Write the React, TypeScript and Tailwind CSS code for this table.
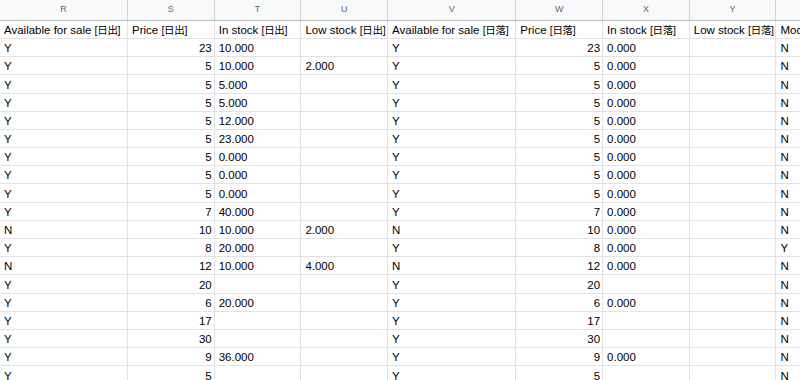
import React from "react";

type Col = { letter: string; w: string; head: string; cjk: string; right?: boolean };

const cols: Col[] = [
  { letter: "R", w: "w-[128px]", head: "Available for sale ", cjk: "[日出]" },
  { letter: "S", w: "w-[86.7px]", head: "Price ", cjk: "[日出]", right: true },
  { letter: "T", w: "w-[86.7px]", head: "In stock ", cjk: "[日出]" },
  { letter: "U", w: "w-[86.7px]", head: "Low stock ", cjk: "[日出]" },
  { letter: "V", w: "w-[128.3px]", head: "Available for sale ", cjk: "[日落]" },
  { letter: "W", w: "w-[86.7px]", head: "Price ", cjk: "[日落]", right: true },
  { letter: "X", w: "w-[86.7px]", head: "In stock ", cjk: "[日落]" },
  { letter: "Y", w: "w-[86.7px]", head: "Low stock ", cjk: "[日落]" },
  { letter: "Z", w: "w-[100px]", head: "Mod", cjk: "" },
];

const rows: string[][] = [
  ["Y", "23", "10.000", "", "Y", "23", "0.000", "", "N"],
  ["Y", "5", "10.000", "2.000", "Y", "5", "0.000", "", "N"],
  ["Y", "5", "5.000", "", "Y", "5", "0.000", "", "N"],
  ["Y", "5", "5.000", "", "Y", "5", "0.000", "", "N"],
  ["Y", "5", "12.000", "", "Y", "5", "0.000", "", "N"],
  ["Y", "5", "23.000", "", "Y", "5", "0.000", "", "N"],
  ["Y", "5", "0.000", "", "Y", "5", "0.000", "", "N"],
  ["Y", "5", "0.000", "", "Y", "5", "0.000", "", "N"],
  ["Y", "5", "0.000", "", "Y", "5", "0.000", "", "N"],
  ["Y", "7", "40.000", "", "Y", "7", "0.000", "", "N"],
  ["N", "10", "10.000", "2.000", "N", "10", "0.000", "", "N"],
  ["Y", "8", "20.000", "", "Y", "8", "0.000", "", "Y"],
  ["N", "12", "10.000", "4.000", "N", "12", "0.000", "", "N"],
  ["Y", "20", "", "", "Y", "20", "", "", "N"],
  ["Y", "6", "20.000", "", "Y", "6", "0.000", "", "N"],
  ["Y", "17", "", "", "Y", "17", "", "", "N"],
  ["Y", "30", "", "", "Y", "30", "", "", "N"],
  ["Y", "9", "36.000", "", "Y", "9", "0.000", "", "N"],
  ["Y", "5", "", "", "Y", "5", "", "", "N"],
];

const font = { fontFamily: '"Liberation Sans", Arial, "Noto Sans CJK JP", sans-serif' };

export default function App() {
  return (
    <div className="w-[800px] h-[380px] overflow-hidden bg-white text-black" style={font}>
      <div className="flex h-[20.8px] bg-[#f8f9fa] border-b border-[#c0c0c0]">
        {cols.map((c) => (
          <div
            key={c.letter}
            className={`${c.w} shrink-0 border-r border-[#d0d0d0] flex items-center justify-center text-[9px] text-[#666666]`}
          >
            {c.letter}
          </div>
        ))}
      </div>
      <div className="flex h-[18.2px] border-b border-[#e2e2e2]">
        {cols.map((c) => (
          <div
            key={c.letter}
            className={`${c.w} shrink-0 border-r border-[#e2e2e2] flex items-end pl-[4px] pr-[2px] pb-[1px] text-[11.5px] leading-[14px] whitespace-nowrap overflow-hidden`}
          >
            <span className="whitespace-pre">{c.head}</span>
            {c.cjk && <span className="text-[10.5px] tracking-[-0.3px]">{c.cjk}</span>}
          </div>
        ))}
      </div>
      {rows.map((r, i) => (
        <div key={i} className="flex h-[18.2px] border-b border-[#e2e2e2]">
          {cols.map((c, j) => (
            <div
              key={c.letter}
              className={`${c.w} shrink-0 border-r border-[#e2e2e2] flex items-end ${
                c.right ? "justify-end" : "justify-start"
              } pl-[4px] pr-[2px] pb-[1px] text-[11.5px] leading-[14px] whitespace-nowrap overflow-hidden`}
            >
              {r[j]}
            </div>
          ))}
        </div>
      ))}
    </div>
  );
}
